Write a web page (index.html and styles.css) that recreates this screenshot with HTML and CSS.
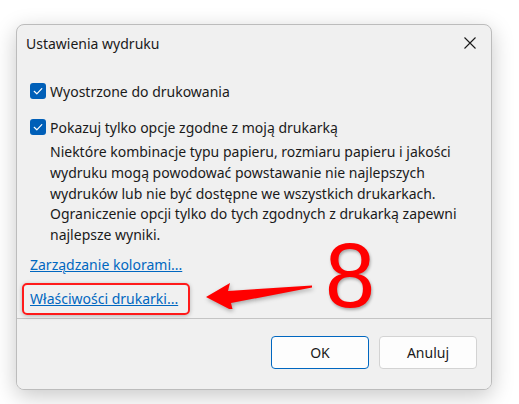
FILE: index.html
```html
<!DOCTYPE html>
<html lang="pl">
<head>
<meta charset="utf-8">
<link rel="stylesheet" href="styles.css">
</head>
<body>
<div class="dialog">
  <div class="titlebar">
    <span class="title">Ustawienia wydruku</span>
    <svg class="close" width="12" height="12" viewBox="0 0 12 12"><path d="M0.5 0.5 L11.5 11.5 M11.5 0.5 L0.5 11.5" stroke="#1a1a1a" stroke-width="1.1" fill="none"/></svg>
  </div>
  <div class="content">
    <label class="check-row first">
      <span class="box"><svg width="16" height="16" viewBox="0 0 16 16"><path d="M4.2 8.3 L6.8 10.8 L11.8 5.6" stroke="#fff" stroke-width="1.2" fill="none" stroke-linecap="round" stroke-linejoin="round"/></svg></span>
      <span class="label">Wyostrzone do drukowania</span>
    </label>
    <label class="check-row second">
      <span class="box"><svg width="16" height="16" viewBox="0 0 16 16"><path d="M4.2 8.3 L6.8 10.8 L11.8 5.6" stroke="#fff" stroke-width="1.2" fill="none" stroke-linecap="round" stroke-linejoin="round"/></svg></span>
      <span class="label">Pokazuj tylko opcje zgodne z moją drukarką</span>
    </label>
    <p class="desc">Niektóre kombinacje typu papieru, rozmiaru papieru i jakości<br>wydruku mogą powodować powstawanie nie najlepszych<br>wydruków lub nie być dostępne we wszystkich drukarkach.<br>Ograniczenie opcji tylko do tych zgodnych z drukarką zapewni<br>najlepsze wyniki.</p>
    <div class="links">
      <a class="link" href="#">Zarządzanie kolorami...</a>
      <div class="annot-row">
        <span class="highlight"><a class="link" href="#">Właściwości drukarki...</a></span>
        <svg class="arrow" width="120" height="30" viewBox="0 0 120 30"><path d="M1 18 L25 4 L23 12 L107 6.5 L107 8.5 L26 24 L28 32 Z" fill="#ff0000"/></svg>
        <span class="eight">8</span>
      </div>
    </div>
  </div>
  <div class="footer">
    <button class="btn primary">OK</button>
    <button class="btn">Anuluj</button>
  </div>
</div>
</body>
</html>
```
FILE: styles.css
```css
html, body {
  margin: 0;
  padding: 0;
  background: #ffffff;
}
body {
  font-family: "Noto Sans", "Segoe UI", sans-serif;
  font-size: 14px;
  color: #1a1a1a;
  padding: 24px 0 0 16px;
  width: 519px;
  height: 404px;
  box-sizing: border-box;
  overflow: hidden;
}
.dialog {
  width: 476px;
  height: 366px;
  box-sizing: border-box;
  border: 1px solid #bcbcbc;
  border-radius: 8px;
  background: #f0f0f0;
  box-shadow: 0 6px 22px rgba(0,0,0,0.22);
  display: flex;
  flex-direction: column;
  overflow: hidden;
}
.titlebar {
  height: 36px;
  display: flex;
  align-items: center;
  justify-content: space-between;
  padding: 0 15px 0 9px;
  flex: none;
}
.title {
  font-size: 14px;
}
.content {
  flex: 1;
  padding: 20px 13px 0 13px;
  position: relative;
}
.check-row {
  display: flex;
  align-items: center;
  gap: 4px;
  height: 20px;
}
.check-row.second {
  margin-top: 16px;
}
.box {
  width: 16px;
  height: 16px;
  border-radius: 3px;
  background: #005fb8;
  flex: none;
  display: block;
}
.box svg { display: block; }
.desc {
  margin: 5px 0 0 20px;
  line-height: 20.8px;
}
.links {
  margin-top: 9px;
  display: flex;
  flex-direction: column;
}
.link {
  color: #0067c0;
  text-decoration: underline;
  line-height: 20px;
}
.annot-row {
  position: relative;
  margin-top: 8px;
  height: 32px;
}
.highlight {
  display: inline-block;
  margin-left: -8px;
  padding: 4px 10px 4px 6px;
  border: 2px solid #ff1a1a;
  border-radius: 5px;
  box-shadow: 0 1px 4px rgba(0,0,0,0.25);
}
.arrow {
  position: absolute;
  left: 175px;
  top: -4px;
  filter: drop-shadow(1px 2px 2px rgba(0,0,0,0.3));
}
.eight {
  position: absolute;
  left: 295px;
  top: -52px;
  font-family: "Liberation Sans", sans-serif;
  font-size: 90px;
  line-height: 90px;
  color: #ff0000;
  text-shadow: 1px 2px 3px rgba(0,0,0,0.3);
}
.footer {
  flex: none;
  height: 71px;
  border-top: 1px solid #c4c4c4;
  background: #f0f0f0;
  display: flex;
  justify-content: flex-end;
  align-items: flex-start;
  gap: 10px;
  padding: 17px 14px 0 0;
  box-sizing: border-box;
}
.btn {
  width: 98px;
  height: 33px;
  font-family: inherit;
  font-size: 14px;
  color: #1a1a1a;
  background: #fdfdfd;
  border: 1px solid #d3d3d3;
  border-radius: 4px;
}
.btn.primary {
  border-color: #0067c0;
}
```
